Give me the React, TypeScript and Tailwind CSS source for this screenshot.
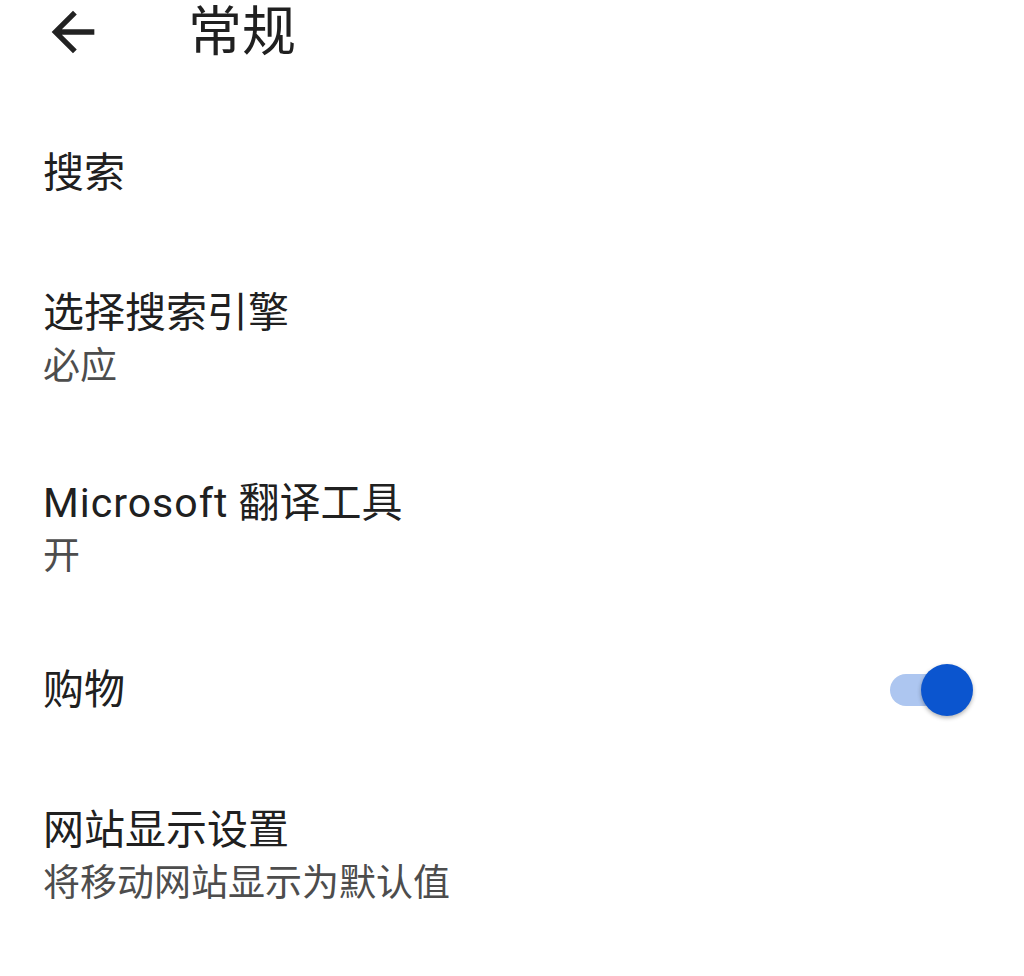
import React from "react";

const font = { fontFamily: 'Roboto, "Noto Sans CJK SC", sans-serif' };

function Row({ title, sub, mt, toggle }: { title: React.ReactNode; sub?: string; mt: string; toggle?: boolean }) {
  return (
    <div className={`flex items-center justify-between pl-[43px] pr-[51px] ${mt}`}>
      <div className="flex flex-col">
        <div className="text-[41px] leading-[54px] text-[#202020]">{title}</div>
        {sub && <div className="text-[37px] leading-[54px] text-[#4d4d4d]">{sub}</div>}
      </div>
      {toggle && (
        <div className="relative w-[83px] h-[52px] flex items-center">
          <div className="w-[70px] h-[32px] rounded-full bg-[#adc6f0]" />
          <div className="absolute right-0 top-0 w-[52px] h-[52px] rounded-full bg-[#0b55cf] shadow-[0_2px_4px_rgba(0,0,0,0.3)]" />
        </div>
      )}
    </div>
  );
}

export default function App() {
  return (
    <div className="w-[1024px] h-[976px] bg-white overflow-hidden" style={font}>
      <div className="flex items-center h-[64px] pt-[2px]">
        <svg className="ml-[41px] w-[64px] h-[64px] shrink-0 -mt-[2px]" viewBox="0 0 24 24" fill="#222">
          <path d="M20 11H7.83l5.59-5.59L12 4l-8 8 8 8 1.41-1.41L7.83 13H20v-2z" />
        </svg>
        <div className="ml-[83px] text-[54px] leading-[64px] text-[#202020]">常规</div>
      </div>
      <Row title="搜索" mt="mt-[82px]" />
      <Row title="选择搜索引擎" sub="必应" mt="mt-[86px]" />
      <Row
        title={
          <>
            <span className="tracking-[1px]">Microsoft</span> 翻译工具
          </>
        }
        sub="开"
        mt="mt-[82px]"
      />
      <Row title="购物" mt="mt-[79px]" toggle />
      <Row title="网站显示设置" sub="将移动网站显示为默认值" mt="mt-[86px]" />
    </div>
  );
}
